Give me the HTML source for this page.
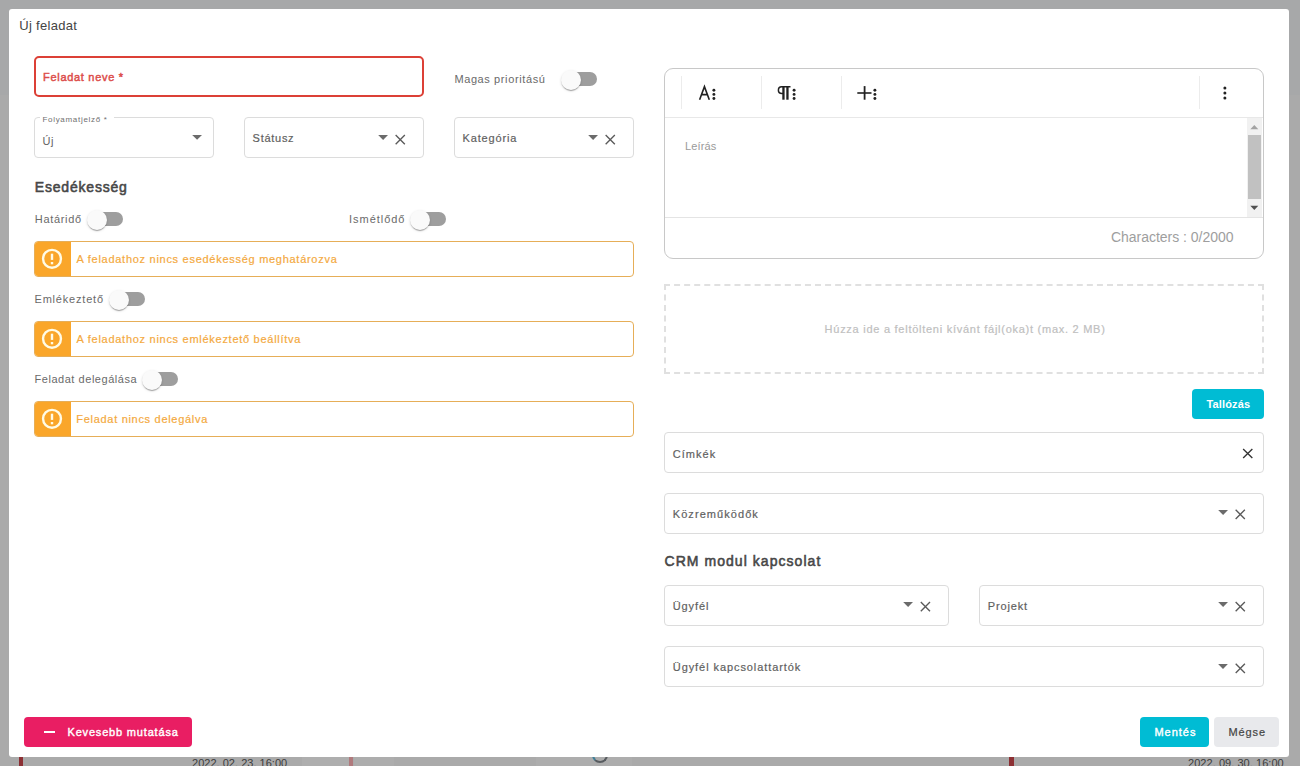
<!DOCTYPE html>
<html><head><meta charset="utf-8">
<style>
*{box-sizing:border-box;margin:0;padding:0}
html,body{width:1300px;height:766px;overflow:hidden;background:#aaaaaa;font-family:"Liberation Sans",sans-serif}
.t{position:absolute;white-space:nowrap;line-height:1}
.a{position:absolute}
#modal{position:absolute;left:9px;top:9px;width:1280px;height:748px;background:#fff;border-radius:3px}
.box{position:absolute;border:1px solid #dcdcdc;border-radius:4px;background:#fff;height:41px}
.tr{position:absolute;width:34px;height:14px;border-radius:7px;background:#9e9e9e}
.th{position:absolute;width:20px;height:20px;border-radius:50%;background:#fafafa;box-shadow:0 2px 1px -1px rgba(0,0,0,.2),0 1px 1px 0 rgba(0,0,0,.14),0 1px 3px 0 rgba(0,0,0,.12)}
.warn{position:absolute;left:34px;width:600px;height:36px;border:1px solid #e6ae58;border-radius:4px;background:#fff;overflow:hidden}
.warn .ic{position:absolute;left:-1px;top:-1px;width:37px;height:36px;background:#faa62a}
.btn{position:absolute;border-radius:4px}
.sep{position:absolute;width:1px;height:33px;background:#ececec;top:76px}
#ov{position:absolute;left:0;top:0}
</style></head><body>
<div class="a" style="left:0;top:0;width:1300px;height:95px;background:#a7a8a9"></div>
<div class="a" style="left:0;top:95px;width:17px;height:671px;background:#aaaaaa"></div>
<div class="a" style="left:1289px;top:95px;width:11px;height:671px;background:#aaaaaa"></div>
<div class="a" style="left:19px;top:757px;width:4px;height:9px;background:#8c2f33"></div>
<div class="a" style="left:349px;top:757px;width:4px;height:9px;background:#b07a7d"></div>
<div class="a" style="left:1009px;top:757px;width:5px;height:9px;background:#8c2f33"></div>
<div class="a" style="left:536px;top:757px;width:96px;height:9px;background:#adadad"></div>
<div class="a" style="left:302px;top:757px;width:47px;height:9px;background:#aeaeae"></div>
<div class="a" style="left:354px;top:757px;width:40px;height:9px;background:#adadad"></div>
<div class="t" style="left:192px;top:758px;font-size:11px;color:#3c3c3c;letter-spacing:0.02px;">2022. 02. 23. 16:00</div>
<div class="t" style="left:1188px;top:758px;font-size:11px;color:#3c3c3c;letter-spacing:0.05px;">2022. 09. 30. 16:00</div>
<div class="a" style="left:591.5px;top:747px;width:16px;height:16px;border-radius:50%;border:2px solid #585c60;border-left-color:#3f7f98;border-top-color:#3f7f98"></div>
<div id="modal"></div>
<div class="t" style="left:19.3px;top:19px;font-size:13px;color:#444;letter-spacing:0.3px;">Új feladat</div>
<div class="box" style="left:34px;top:56px;width:390px;height:41px;border:2px solid #dc4036;border-radius:5px"></div>
<div class="t" style="left:43px;top:72px;font-size:11px;color:#dc4c4a;letter-spacing:0.7px;-webkit-text-stroke:0.45px #dc4c4a">Feladat neve *</div>
<div class="t" style="left:454.4px;top:74px;font-size:11px;color:#6a6a6a;letter-spacing:0.61px;">Magas prioritású</div>
<div class="tr" style="left:563px;top:72px"></div><div class="th" style="left:561px;top:70px"></div>
<div class="box" style="left:34px;top:117px;width:180px"></div>
<div class="a" style="left:40px;top:114px;width:74px;height:6px;background:#fff"></div>
<div class="t" style="left:42.5px;top:115.6px;font-size:8px;color:#707070;letter-spacing:0.69px;">Folyamatjelző *</div>
<div class="t" style="left:42.6px;top:136px;font-size:11px;color:#636363;letter-spacing:0.5px;">Új</div>
<div class="box" style="left:244px;top:117px;width:180px"></div>
<div class="t" style="left:252.6px;top:133px;font-size:11px;color:#5f5f5f;letter-spacing:0.72px;-webkit-text-stroke:0.2px #5f5f5f">Státusz</div>
<div class="box" style="left:454px;top:117px;width:180px"></div>
<div class="t" style="left:462.6px;top:133px;font-size:11px;color:#5f5f5f;letter-spacing:0.84px;-webkit-text-stroke:0.2px #5f5f5f">Kategória</div>
<div class="t" style="left:34.8px;top:180px;font-size:14px;color:#474747;letter-spacing:0.8px;-webkit-text-stroke:0.55px #474747">Esedékesség</div>
<div class="t" style="left:34.8px;top:214px;font-size:11px;color:#6a6a6a;letter-spacing:0.68px;">Határidő</div>
<div class="tr" style="left:89px;top:212px"></div><div class="th" style="left:87px;top:210px"></div>
<div class="t" style="left:349px;top:214px;font-size:11px;color:#6a6a6a;letter-spacing:0.97px;">Ismétlődő</div>
<div class="tr" style="left:412px;top:212px"></div><div class="th" style="left:410px;top:210px"></div>
<div class="warn" style="top:241px"><div class="ic"></div></div>
<div class="t" style="left:76.6px;top:254px;font-size:11px;color:#f4a93e;letter-spacing:0.72px;-webkit-text-stroke:0.2px #f4a93e">A feladathoz nincs esedékesség meghatározva</div>
<div class="t" style="left:34.5px;top:294px;font-size:11px;color:#6a6a6a;letter-spacing:0.8px;">Emlékeztető</div>
<div class="tr" style="left:111px;top:292px"></div><div class="th" style="left:109px;top:290px"></div>
<div class="warn" style="top:321px"><div class="ic"></div></div>
<div class="t" style="left:76.6px;top:334px;font-size:11px;color:#f4a93e;letter-spacing:0.72px;-webkit-text-stroke:0.2px #f4a93e">A feladathoz nincs emlékeztető beállítva</div>
<div class="t" style="left:34.5px;top:374px;font-size:11px;color:#6a6a6a;letter-spacing:0.54px;">Feladat delegálása</div>
<div class="tr" style="left:144px;top:372px"></div><div class="th" style="left:142px;top:370px"></div>
<div class="warn" style="top:401px"><div class="ic"></div></div>
<div class="t" style="left:76.3px;top:414px;font-size:11px;color:#f4a93e;letter-spacing:0.7px;-webkit-text-stroke:0.2px #f4a93e">Feladat nincs delegálva</div>
<div class="a" style="left:664px;top:68px;width:600px;height:191px;border:1px solid #c8c8c8;border-radius:9px;background:#fff"></div>
<div class="sep" style="left:681px"></div>
<div class="sep" style="left:761px"></div>
<div class="sep" style="left:841px"></div>
<div class="sep" style="left:1199px"></div>
<div class="a" style="left:665px;top:117px;width:598px;height:1px;background:#e8e8e8"></div>
<div class="a" style="left:665px;top:217px;width:598px;height:1px;background:#e4e4e4"></div>
<div class="t" style="left:685px;top:141px;font-size:11px;color:#9a9a9a;letter-spacing:0.14px;">Leírás</div>
<div class="a" style="left:1247px;top:118px;width:15px;height:99px;background:#f1f1f1"></div>
<div class="a" style="left:1248px;top:135px;width:13px;height:64px;background:#c1c1c1"></div>
<div class="t" style="left:1111px;top:230px;font-size:14px;color:#9e9e9e;letter-spacing:-0.028px;">Characters : 0/2000</div>
<div class="a" style="left:664px;top:284px;width:600px;height:90px;border:2px dashed #e0e0e0"></div>
<div class="t" style="left:824.6px;top:324px;font-size:11px;color:#c0c0c0;letter-spacing:0.736px;-webkit-text-stroke:0.2px #c0c0c0">Húzza ide a feltölteni kívánt fájl(oka)t (max. 2 MB)</div>
<div class="btn" style="left:1192px;top:389px;width:72px;height:30px;background:#00bcd4"></div>
<div class="t" style="left:1206.5px;top:399px;font-size:11px;color:#fff;font-weight:bold;letter-spacing:0.13px;">Tallózás</div>
<div class="box" style="left:664px;top:432px;width:600px"></div>
<div class="t" style="left:672.7px;top:449px;font-size:11px;color:#5f5f5f;letter-spacing:1.06px;-webkit-text-stroke:0.2px #5f5f5f">Címkék</div>
<div class="box" style="left:664px;top:493px;width:600px"></div>
<div class="t" style="left:672.8px;top:509px;font-size:11px;color:#5f5f5f;letter-spacing:1.06px;-webkit-text-stroke:0.2px #5f5f5f">Közreműködők</div>
<div class="t" style="left:664.5px;top:554px;font-size:14px;color:#474747;letter-spacing:1.05px;-webkit-text-stroke:0.55px #474747">CRM modul kapcsolat</div>
<div class="box" style="left:664px;top:585px;width:285px"></div>
<div class="t" style="left:672.7px;top:601px;font-size:11px;color:#5f5f5f;letter-spacing:0.91px;-webkit-text-stroke:0.2px #5f5f5f">Ügyfél</div>
<div class="box" style="left:979px;top:585px;width:285px"></div>
<div class="t" style="left:987.8px;top:601px;font-size:11px;color:#5f5f5f;letter-spacing:0.85px;-webkit-text-stroke:0.2px #5f5f5f">Projekt</div>
<div class="box" style="left:664px;top:646px;width:600px"></div>
<div class="t" style="left:672.8px;top:662px;font-size:11px;color:#5f5f5f;letter-spacing:0.92px;-webkit-text-stroke:0.2px #5f5f5f">Ügyfél kapcsolattartók</div>
<div class="btn" style="left:24px;top:717px;width:168px;height:30px;background:#e91e63"></div>
<div class="a" style="left:44px;top:731px;width:11px;height:2px;background:#fff"></div>
<div class="t" style="left:67.5px;top:727.2px;font-size:11px;color:#fff;letter-spacing:0.82px;-webkit-text-stroke:0.4px #fff">Kevesebb mutatása</div>
<div class="btn" style="left:1140px;top:717px;width:69px;height:30px;background:#00bcd4"></div>
<div class="t" style="left:1154.4px;top:727.2px;font-size:11px;color:#fff;letter-spacing:1.0px;-webkit-text-stroke:0.4px #fff">Mentés</div>
<div class="btn" style="left:1214px;top:717px;width:65px;height:30px;background:#e8e9ec"></div>
<div class="t" style="left:1228.5px;top:727px;font-size:11px;color:#444;letter-spacing:0.88px;-webkit-text-stroke:0.2px #444">Mégse</div>
<svg id="ov" width="1300" height="766" viewBox="0 0 1300 766"><path d="M192.20 134.90H202.00L197.10 139.80Z" fill="#6b6b6b"/><path d="M378.20 135.00H388.00L383.10 139.90Z" fill="#6b6b6b"/><path d="M395.65 135.05L404.85 144.25M404.85 135.05L395.65 144.25" stroke="#5a5a5a" stroke-width="1.35" fill="none"/><path d="M588.20 135.00H598.00L593.10 139.90Z" fill="#6b6b6b"/><path d="M605.65 135.05L614.85 144.25M614.85 135.05L605.65 144.25" stroke="#5a5a5a" stroke-width="1.35" fill="none"/><path d="M1243.15 448.90L1252.35 458.10M1252.35 448.90L1243.15 458.10" stroke="#333" stroke-width="1.35" fill="none"/><path d="M1218.20 510.00H1228.00L1223.10 514.90Z" fill="#6b6b6b"/><path d="M1235.65 509.75L1244.85 518.95M1244.85 509.75L1235.65 518.95" stroke="#5a5a5a" stroke-width="1.35" fill="none"/><path d="M903.20 602.00H913.00L908.10 606.90Z" fill="#6b6b6b"/><path d="M920.80 602.05L930.00 611.25M930.00 602.05L920.80 611.25" stroke="#5a5a5a" stroke-width="1.35" fill="none"/><path d="M1218.20 602.00H1228.00L1223.10 606.90Z" fill="#6b6b6b"/><path d="M1235.65 602.05L1244.85 611.25M1244.85 602.05L1235.65 611.25" stroke="#5a5a5a" stroke-width="1.35" fill="none"/><path d="M1218.10 664.00H1227.90L1223.00 668.90Z" fill="#6b6b6b"/><path d="M1235.70 663.85L1244.90 673.05M1244.90 663.85L1235.70 673.05" stroke="#5a5a5a" stroke-width="1.35" fill="none"/><circle cx="52" cy="258.8" r="8.95" stroke="#fffbe6" stroke-width="2.4" fill="none"/><rect x="50.80" y="253.70" width="2.4" height="6.2" fill="#fffbe6"/><rect x="50.80" y="262.00" width="2.4" height="2.3" fill="#fffbe6"/><circle cx="52" cy="338.8" r="8.95" stroke="#fffbe6" stroke-width="2.4" fill="none"/><rect x="50.80" y="333.70" width="2.4" height="6.2" fill="#fffbe6"/><rect x="50.80" y="342.00" width="2.4" height="2.3" fill="#fffbe6"/><circle cx="52" cy="418.8" r="8.95" stroke="#fffbe6" stroke-width="2.4" fill="none"/><rect x="50.80" y="413.70" width="2.4" height="6.2" fill="#fffbe6"/><rect x="50.80" y="422.00" width="2.4" height="2.3" fill="#fffbe6"/><path d="M699.6 99.7L704.45 86.6L709.3 99.7M701.3 94.65H707.6" stroke="#222" stroke-width="1.6" fill="none" stroke-linejoin="miter"/><circle cx="713.9" cy="90.30" r="1.45" fill="#222"/><circle cx="713.9" cy="94.40" r="1.45" fill="#222"/><circle cx="713.9" cy="98.50" r="1.45" fill="#222"/><path d="M790.5 86.85H781.6C779.6 86.85 778.4 88.4 778.4 90.2C778.4 92.1 779.8 93.4 781.8 93.4H783.4" stroke="#222" stroke-width="1.5" fill="none"/><rect x="782.3" y="86.1" width="2.3" height="13.6" fill="#222"/><rect x="786.3" y="86.1" width="2.3" height="13.6" fill="#222"/><circle cx="794.1" cy="90.30" r="1.45" fill="#222"/><circle cx="794.1" cy="94.40" r="1.45" fill="#222"/><circle cx="794.1" cy="98.50" r="1.45" fill="#222"/><rect x="857.3" y="92.2" width="14.2" height="1.6" fill="#222"/><rect x="863.7" y="86.1" width="1.8" height="13.6" fill="#222"/><circle cx="874.9" cy="90.30" r="1.45" fill="#222"/><circle cx="874.9" cy="94.40" r="1.45" fill="#222"/><circle cx="874.9" cy="98.50" r="1.45" fill="#222"/><circle cx="1224.9" cy="87.90" r="1.5" fill="#222"/><circle cx="1224.9" cy="92.90" r="1.5" fill="#222"/><circle cx="1224.9" cy="97.90" r="1.5" fill="#222"/><path d="M1250.3 129.2H1258.3L1254.3 125Z" fill="#a3a3a3"/><path d="M1250.3 205.8H1258.3L1254.3 210Z" fill="#505050"/></svg>
</body></html>
